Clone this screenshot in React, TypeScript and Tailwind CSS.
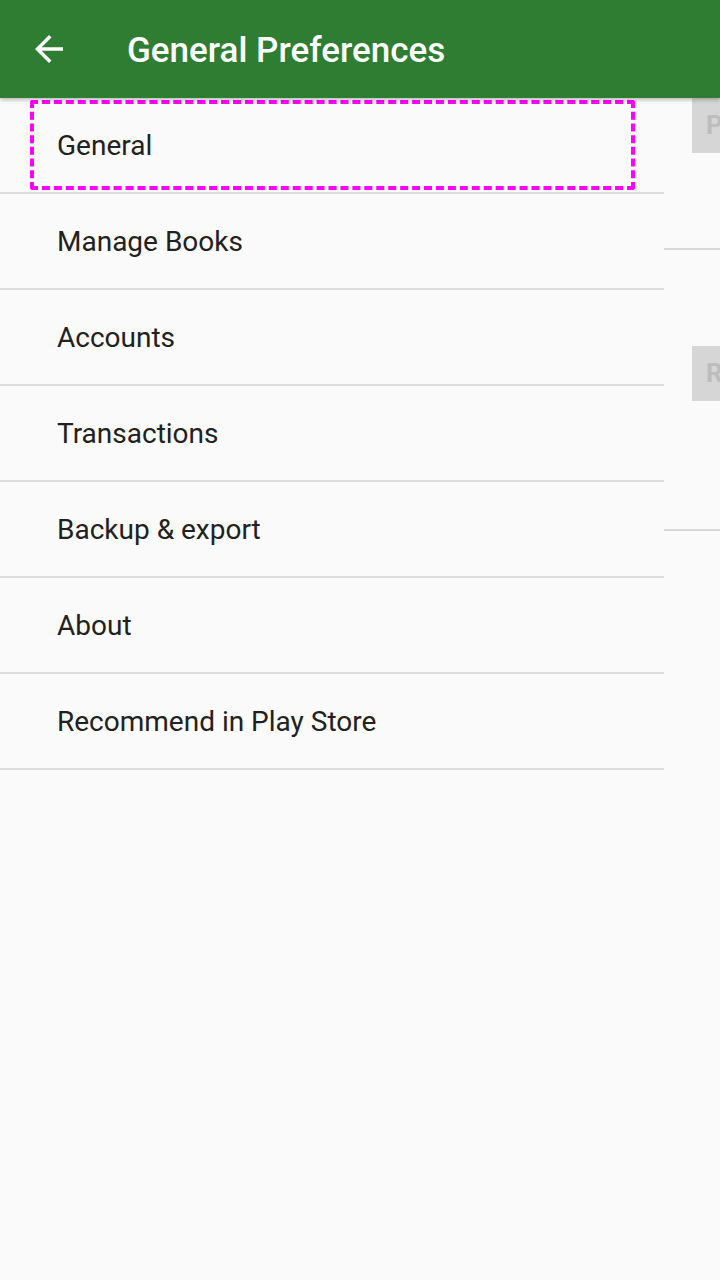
import React from "react";

const ITEMS = [
  "General",
  "Manage Books",
  "Accounts",
  "Transactions",
  "Backup & export",
  "About",
  "Recommend in Play Store",
];

function BackArrow() {
  return (
    <svg viewBox="0 0 24 24" className="w-[42px] h-[42px]" fill="#ffffff">
      <path d="M20 11H7.83l5.59-5.59L12 4l-8 8 8 8 1.41-1.41L7.83 13H20v-2z" />
    </svg>
  );
}

export default function App() {
  return (
    <div className="w-[720px] h-[1280px] bg-[#fafafa] overflow-hidden relative font-['Roboto',sans-serif]">
      <header className="relative z-10 h-[98px] bg-[#2e7d32] flex items-center shadow-[0_2px_4px_rgba(0,0,0,0.25)]">
        <div className="pl-[28px] w-[127px] flex items-center">
          <BackArrow />
        </div>
        <h1 className="text-white text-[35px] font-medium leading-none pt-[3px]">General Preferences</h1>
      </header>

      <div className="flex">
        <ul className="w-[664px] shrink-0">
          {ITEMS.map((label) => (
            <li
              key={label}
              className="h-[96px] border-b-2 border-[#dcdcdc] flex items-center pl-[57px] pt-[2px] text-[28px] text-[#212121]"
            >
              {label}
            </li>
          ))}
        </ul>

        <div className="flex-1 flex flex-col">
          <div className="ml-[28px] h-[55px] bg-[#d6d6d6] flex items-center pl-[14px] text-[26px] font-bold text-[#bdbdbd]">
            P
          </div>
          <div className="mt-[95px] h-[2px] bg-[#d6d6d6]" />
          <div className="mt-[96px] ml-[28px] h-[55px] bg-[#d6d6d6] flex items-center pl-[14px] text-[26px] font-bold text-[#bdbdbd]">
            R
          </div>
          <div className="mt-[128px] h-[2px] bg-[#d6d6d6]" />
        </div>
      </div>

      <div className="absolute left-[30px] top-[100px] w-[605px] h-[90px] border-4 border-dashed border-[#ff00ff] rounded-[3px]" />
    </div>
  );
}
